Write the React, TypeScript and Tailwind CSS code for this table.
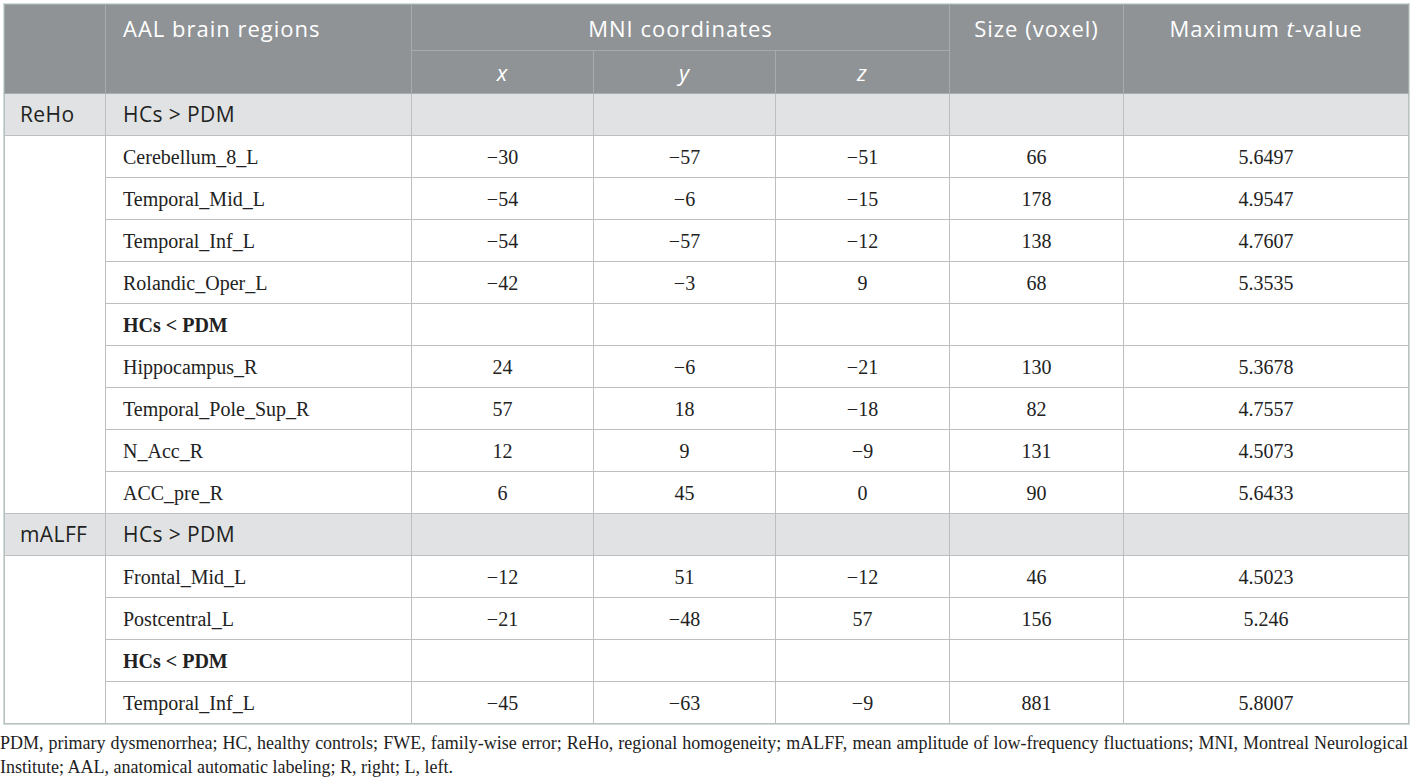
import React from "react";

type Row =
  | { kind: "sub"; title: string }
  | { kind: "data"; region: string; x: string; y: string; z: string; size: string; t: string };

const serif = "font-['Liberation_Serif','Times_New_Roman',serif]";
const sans = "font-['Open_Sans','Lato',sans-serif]";

const groups: { label: string; title: string; rows: Row[] }[] = [
  {
    label: "ReHo",
    title: "HCs > PDM",
    rows: [
      { kind: "data", region: "Cerebellum_8_L", x: "−30", y: "−57", z: "−51", size: "66", t: "5.6497" },
      { kind: "data", region: "Temporal_Mid_L", x: "−54", y: "−6", z: "−15", size: "178", t: "4.9547" },
      { kind: "data", region: "Temporal_Inf_L", x: "−54", y: "−57", z: "−12", size: "138", t: "4.7607" },
      { kind: "data", region: "Rolandic_Oper_L", x: "−42", y: "−3", z: "9", size: "68", t: "5.3535" },
      { kind: "sub", title: "HCs < PDM" },
      { kind: "data", region: "Hippocampus_R", x: "24", y: "−6", z: "−21", size: "130", t: "5.3678" },
      { kind: "data", region: "Temporal_Pole_Sup_R", x: "57", y: "18", z: "−18", size: "82", t: "4.7557" },
      { kind: "data", region: "N_Acc_R", x: "12", y: "9", z: "−9", size: "131", t: "4.5073" },
      { kind: "data", region: "ACC_pre_R", x: "6", y: "45", z: "0", size: "90", t: "5.6433" },
    ],
  },
  {
    label: "mALFF",
    title: "HCs > PDM",
    rows: [
      { kind: "data", region: "Frontal_Mid_L", x: "−12", y: "51", z: "−12", size: "46", t: "4.5023" },
      { kind: "data", region: "Postcentral_L", x: "−21", y: "−48", z: "57", size: "156", t: "5.246" },
      { kind: "sub", title: "HCs < PDM" },
      { kind: "data", region: "Temporal_Inf_L", x: "−45", y: "−63", z: "−9", size: "881", t: "5.8007" },
    ],
  },
];

const th =
  "border border-[#a7abae] font-normal text-white text-[22px] tracking-[1px] leading-[28px] p-0";
const td = "border border-[#bcbfc1] h-[42px] p-0 align-middle";

export default function App() {
  return (
    <div className="w-[1414px] h-[782px] bg-white overflow-hidden">
      <div className="pt-[3px] pl-[3px] pr-[4px]">
        <div className="border border-[#cddcd7]">
          <table className="w-full table-fixed border-collapse">
            <colgroup>
              <col className="w-[101px]" />
              <col className="w-[306px]" />
              <col className="w-[182px]" />
              <col className="w-[182px]" />
              <col className="w-[174px]" />
              <col className="w-[174px]" />
              <col />
            </colgroup>
            <thead className={`bg-[#8f9396] ${sans}`}>
              <tr className="h-[46px]">
                <th rowSpan={2} className={`${th} align-top`} />
                <th rowSpan={2} className={`${th} align-top text-left pl-[17px] pt-[9px]`}>
                  AAL brain regions
                </th>
                <th colSpan={3} className={`${th} text-center align-middle`}>
                  MNI coordinates
                </th>
                <th rowSpan={2} className={`${th} align-top text-center pt-[9px]`}>
                  Size (voxel)
                </th>
                <th rowSpan={2} className={`${th} align-top text-center pt-[9px]`}>
                  Maximum <i>t</i>-value
                </th>
              </tr>
              <tr className="h-[43px]">
                <th className={`${th} text-center italic align-middle`}>x</th>
                <th className={`${th} text-center italic align-middle`}>y</th>
                <th className={`${th} text-center italic align-middle`}>z</th>
              </tr>
            </thead>
            <tbody>
              {groups.map((g) => (
                <React.Fragment key={g.label}>
                  <tr className={`bg-[#e1e2e3] ${sans} text-[21px] tracking-[0.4px] text-[#222]`}>
                    <td className={`${td} pl-[15px]`}>{g.label}</td>
                    <td className={`${td} pl-[17px]`}>{g.title}</td>
                    <td className={td} />
                    <td className={td} />
                    <td className={td} />
                    <td className={td} />
                    <td className={td} />
                  </tr>
                  {g.rows.map((r, i) => (
                    <tr key={i} className={`${serif} text-[20px] text-[#222]`}>
                      {i === 0 && <td rowSpan={g.rows.length} className={`${td} bg-white`} />}
                      {r.kind === "sub" ? (
                        <>
                          <td className={`${td} pl-[17px] font-bold`}>{r.title}</td>
                          <td className={td} />
                          <td className={td} />
                          <td className={td} />
                          <td className={td} />
                          <td className={td} />
                        </>
                      ) : (
                        <>
                          <td className={`${td} pl-[17px]`}>{r.region}</td>
                          <td className={`${td} text-center`}>{r.x}</td>
                          <td className={`${td} text-center`}>{r.y}</td>
                          <td className={`${td} text-center`}>{r.z}</td>
                          <td className={`${td} text-center`}>{r.size}</td>
                          <td className={`${td} text-center`}>{r.t}</td>
                        </>
                      )}
                    </tr>
                  ))}
                </React.Fragment>
              ))}
            </tbody>
          </table>
        </div>
      </div>
      <p className={`${serif} text-[18px] leading-[24px] text-[#222] text-justify mt-[6px] pr-[6px]`}>
        PDM, primary dysmenorrhea; HC, healthy controls; FWE, family-wise error; ReHo, regional homogeneity;
        mALFF, mean amplitude of low-frequency fluctuations; MNI, Montreal Neurological Institute; AAL,
        anatomical automatic labeling; R, right; L, left.
      </p>
    </div>
  );
}
